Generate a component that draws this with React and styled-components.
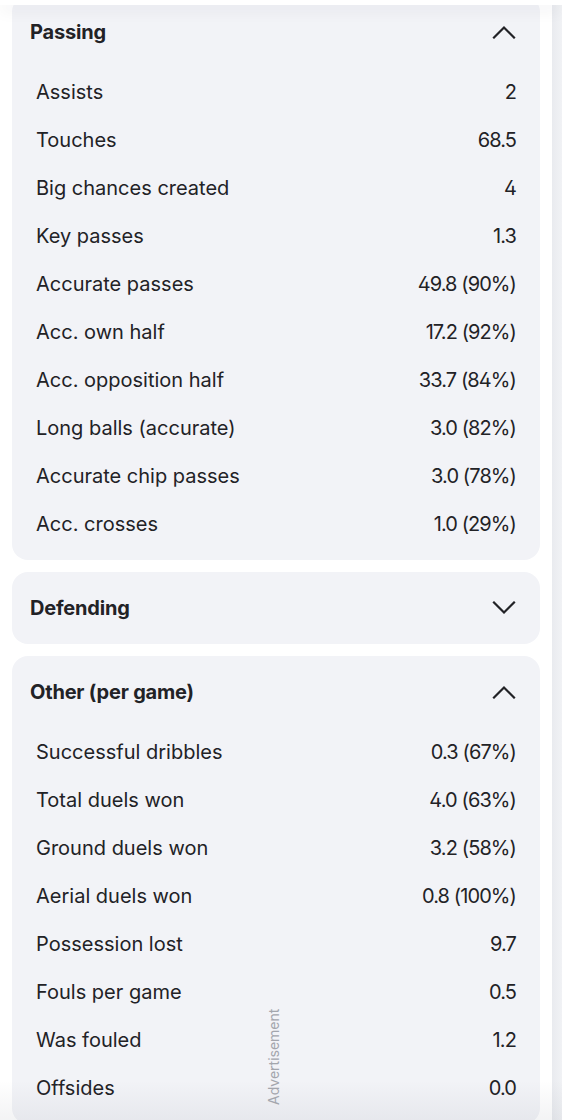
import React from 'react'
import styled, { createGlobalStyle } from 'styled-components'

const GlobalStyle = createGlobalStyle`
  html, body {
    margin: 0;
    padding: 0;
    background: #ffffff;
    overflow: hidden;
  }
  body {
    font-family: Inter, "Noto Sans", "Liberation Sans", sans-serif;
    color: #222226;
  }
`

const passing = [
  ['Assists', '2'],
  ['Touches', '68.5'],
  ['Big chances created', '4'],
  ['Key passes', '1.3'],
  ['Accurate passes', '49.8 (90%)'],
  ['Acc. own half', '17.2 (92%)'],
  ['Acc. opposition half', '33.7 (84%)'],
  ['Long balls (accurate)', '3.0 (82%)'],
  ['Accurate chip passes', '3.0 (78%)'],
  ['Acc. crosses', '1.0 (29%)'],
]

const other = [
  ['Successful dribbles', '0.3 (67%)'],
  ['Total duels won', '4.0 (63%)'],
  ['Ground duels won', '3.2 (58%)'],
  ['Aerial duels won', '0.8 (100%)'],
  ['Possession lost', '9.7'],
  ['Fouls per game', '0.5'],
  ['Was fouled', '1.2'],
  ['Offsides', '0.0'],
]

const Chevron = ({ up }) => (
  <svg width="24" height="14" viewBox="0 0 24 14" fill="none">
    <path
      d={up ? 'M2 12.5 L12 2.5 L22 12.5' : 'M2 1.5 L12 11.5 L22 1.5'}
      stroke="#222226"
      strokeWidth="2.2"
      strokeLinecap="square"
    />
  </svg>
)

const Section = ({ title, rows, open }) => (
  <Card>
    <Header>
      <Title>{title}</Title>
      <Chevron up={open} />
    </Header>
    {open && (
      <Rows>
        {rows.map(([label, value]) => (
          <Row key={label}>
            <Label>{label}</Label>
            <Value>{value}</Value>
          </Row>
        ))}
      </Rows>
    )}
  </Card>
)

const App = () => {
  return (
    <>
      <GlobalStyle />
      <Page>
        <Main>
          <Section title="Passing" rows={passing} open />
          <Section title="Defending" />
          <Section title="Other (per game)" rows={other} open />
        </Main>
        <Side />
        <TopShade />
        <BottomShade />
        <Ad>Advertisement</Ad>
      </Page>
    </>
  )
}

export default App

const Page = styled.div`
  position: relative;
  display: flex;
  width: 562px;
  height: 1120px;
  overflow: hidden;
`
const Main = styled.div`
  width: 552px;
  box-sizing: border-box;
  padding: 0 12px;
  margin-top: -4px;
  display: flex;
  flex-direction: column;
  gap: 12px;
`
const Side = styled.div`
  width: 10px;
  background: linear-gradient(90deg, #e9ebef, #f1f2f5);
`
const Card = styled.div`
  background: #f2f3f7;
  border-radius: 16px;
  padding-bottom: 12px;
  flex-shrink: 0;
`
const Header = styled.div`
  height: 72px;
  display: flex;
  align-items: center;
  justify-content: space-between;
  padding: 0 24px 0 18px;
  margin-bottom: -12px;
`
const Title = styled.div`
  font-size: 20px;
  font-weight: 650;
  letter-spacing: -0.2px;
`
const Rows = styled.div`
  display: flex;
  flex-direction: column;
  padding-top: 12px;
`
const Row = styled.div`
  height: 48px;
  display: flex;
  align-items: center;
  justify-content: space-between;
  padding: 0 24px;
  font-size: 20px;
  font-feature-settings: "cv02";
`
const Label = styled.span`
  font-weight: 400;
`
const Value = styled.span`
  font-weight: 400;
  letter-spacing: -0.9px;
`
const TopShade = styled.div`
  position: absolute;
  left: 0;
  right: 0;
  top: 0;
  height: 5px;
  background: #ffffff;
  box-shadow: 0 4px 16px rgba(20, 30, 50, 0.1);
`
const BottomShade = styled.div`
  position: absolute;
  left: 0;
  right: 0;
  bottom: 0;
  height: 40px;
  background: linear-gradient(180deg, rgba(20, 30, 50, 0), rgba(20, 30, 50, 0.05));
  pointer-events: none;
`
const Ad = styled.div`
  position: absolute;
  left: 265px;
  top: 1003px;
  height: 102px;
  writing-mode: vertical-rl;
  transform: rotate(180deg);
  font-size: 14px;
  color: #a3a6ad;
  font-family: Inter, "Noto Sans", sans-serif;
`
